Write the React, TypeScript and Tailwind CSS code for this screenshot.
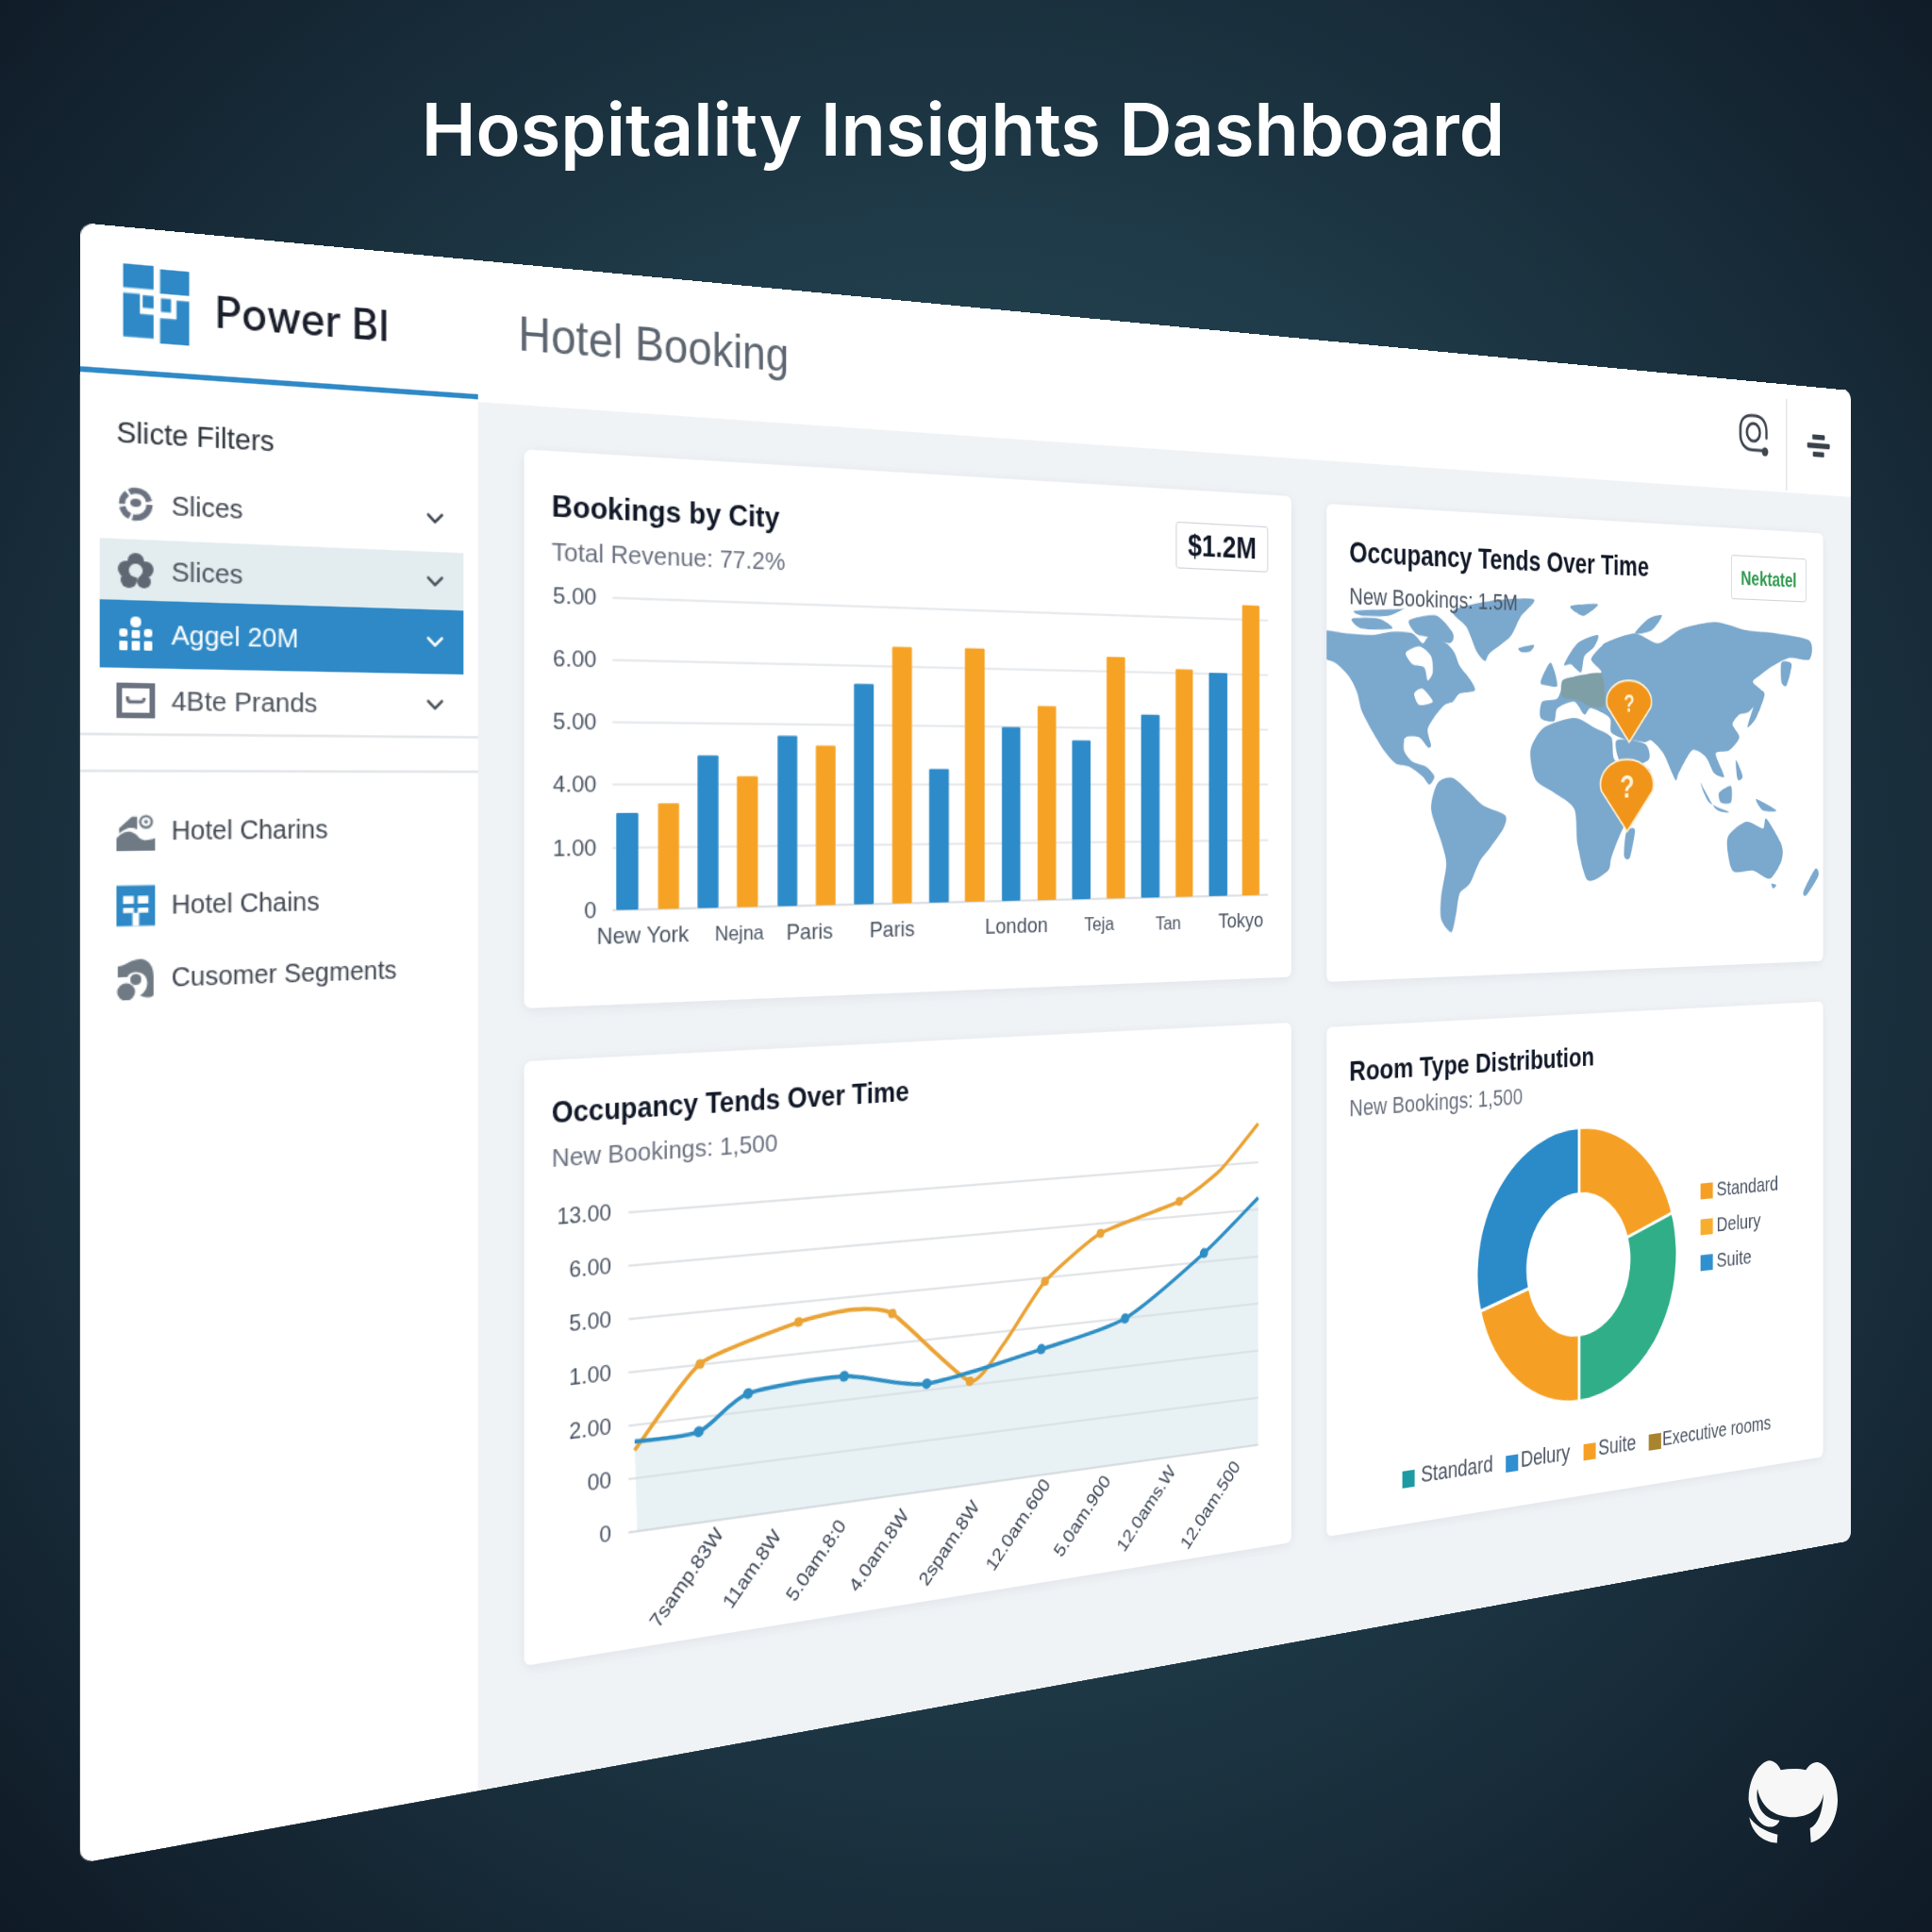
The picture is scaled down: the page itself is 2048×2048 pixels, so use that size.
import React from "react";
import { ChevronDown } from "lucide-react";

/* The dashboard window is laid out flat at 1800x1200 and then tilted with one matrix3d.
   P() converts a point measured on the tilted picture (1568 scale) into the flat chart space. */
const W = 1800, H = 1200, K = 0.42658, S = 2048 / 1568;
type Pt = [number, number];
function P(x: number, y: number): Pt {
  const X = (x - 65) / 1437;
  const u = X / (1 + K - K * X);
  const top = 180.7 + 136.3 * X;
  const bot = 1512.1 - 261.8 * X;
  return [u * W, ((y - top) / (bot - top)) * H];
}
const Z4 = (zx: number, zy: number): Pt => P((1390 + zx / 2.8) / S, (520 + zy / 2.904) / S);
function blob(raw: number[], t = 0.13) {
  const pts: Pt[] = [];
  for (let i = 0; i < raw.length; i += 2) pts.push(Z4(raw[i], raw[i + 1]));
  const n = pts.length;
  let d = `M${pts[0][0].toFixed(1)} ${pts[0][1].toFixed(1)}`;
  for (let i = 0; i < n; i++) {
    const p0 = pts[(i - 1 + n) % n], p1 = pts[i], p2 = pts[(i + 1) % n], p3 = pts[(i + 2) % n];
    d += ` C${(p1[0] + (p2[0] - p0[0]) * t).toFixed(1)} ${(p1[1] + (p2[1] - p0[1]) * t).toFixed(1)} ${(p2[0] - (p3[0] - p1[0]) * t).toFixed(1)} ${(p2[1] - (p3[1] - p1[1]) * t).toFixed(1)} ${p2[0].toFixed(1)} ${p2[1].toFixed(1)}`;
  }
  return d + " Z";
}
function smooth(pts: Pt[], t = 0.16) {
  let d = `M${pts[0][0]} ${pts[0][1]}`;
  for (let i = 0; i < pts.length - 1; i++) {
    const p0 = pts[i - 1] || pts[i], p1 = pts[i], p2 = pts[i + 1], p3 = pts[i + 2] || p2;
    d += ` C${p1[0] + (p2[0] - p0[0]) * t} ${p1[1] + (p2[1] - p0[1]) * t} ${p2[0] - (p3[0] - p1[0]) * t} ${p2[1] - (p3[1] - p1[1]) * t} ${p2[0]} ${p2[1]}`;
  }
  return d;
}

const BLUE = "#2e8bc9", ORANGE = "#f6a325", GRID = "#e1e4e8";

function Label({ at, size = 18, anchor = "middle", fill = "#4b5563", children, rotate }: { at: Pt; size?: number; anchor?: "middle" | "end" | "start"; fill?: string; children: React.ReactNode; rotate?: number }) {
  return (
    <text x={at[0]} y={at[1]} fontSize={size} textAnchor={anchor} dominantBaseline="central" fill={fill} transform={rotate ? `rotate(${rotate} ${at[0]} ${at[1]})` : undefined}>
      {children}
    </text>
  );
}

function BarChart() {
  const bars: [number, number, number, string][] = [
    [500, 518, 660, BLUE], [534, 551, 652, ORANGE], [566, 583, 613, BLUE], [598, 615, 630, ORANGE],
    [631, 647, 597, BLUE], [662, 678, 605, ORANGE], [693, 709, 555, BLUE], [724, 740, 525, ORANGE],
    [754, 770, 624, BLUE], [783, 799, 526, ORANGE], [813, 828, 590, BLUE], [842, 857, 573, ORANGE],
    [870, 885, 601, BLUE], [898, 913, 533, ORANGE], [926, 941, 580, BLUE], [954, 968, 543, ORANGE],
    [981, 996, 546, BLUE], [1008, 1022, 491, ORANGE],
  ];
  const ys = [261, 311, 361, 411, 462, 512];
  const yl = ["5.00", "6.00", "5.00", "4.00", "1.00", "0"];
  const xl: [string, number, number][] = [["New York", 522, 759], ["Nejna", 600, 757], ["Paris", 657, 756], ["Paris", 724, 754], ["London", 825, 751], ["Teja", 892, 750], ["Tan", 948, 749], ["Tokyo", 1007, 747]];
  const x0 = P(497, 0)[0], x1 = P(1029, 0)[0], xa = P(484, 0)[0];
  return (
    <svg width={743} height={342} viewBox="342 246 743 342" className="block">
      {ys.map((y, i) => (
        <g key={i}>
          <line x1={x0} x2={x1} y1={y} y2={y} stroke={i === 5 ? "#d3d7dc" : GRID} strokeWidth={1.5} />
          <Label at={[xa, y]} size={19} anchor="end">{yl[i]}</Label>
        </g>
      ))}
      {bars.map(([a, b, t, c], i) => {
        const xA = P(a, 0)[0], xB = P(b, 0)[0], yT = P(a, t)[1];
        return <rect key={i} x={xA} y={yT} width={xB - xA} height={512 - yT} fill={c} rx={1} />;
      })}
      {xl.map(([s, x, y], i) => (
        <Label key={i} at={P(x, y)} size={i === 1 || i === 5 || i === 6 ? 17 : 19}>{s}</Label>
      ))}
    </svg>
  );
}

function Pin({ c, r, tip, size }: { c: Pt; r: number; tip: Pt; size: number }) {
  const C = Z4(c[0], c[1]), T = Z4(tip[0], tip[1]);
  const rx = Z4(c[0] + r, c[1])[0] - C[0];
  const ry = Z4(c[0], c[1] + r)[1] - C[1];
  const lx = C[0] - rx * 0.97, rxx = C[0] + rx * 0.97, ly = C[1] + ry * 0.25;
  const d = `M${T[0]} ${T[1]} L${lx} ${ly} A${rx} ${ry} 0 1 1 ${rxx} ${ly} Z`;
  return (
    <g>
      <path d={d} fill="#f1951a" stroke="#fbeccf" strokeWidth={2} strokeLinejoin="round" />
      <Label at={[C[0], C[1] + 2]} size={size} fill="#fdf1d8">
        <tspan fontWeight="700">?</tspan>
      </Label>
    </g>
  );
}

function WorldMap() {
  const land = [
    [20, 432, 110, 440, 180, 445, 240, 435, 300, 440, 330, 470, 350, 450, 400, 470, 425, 500, 440, 540, 470, 580, 485, 615, 440, 625, 420, 650, 395, 660, 370, 690, 345, 735, 355, 785, 345, 790, 320, 760, 280, 760, 275, 800, 300, 835, 340, 850, 365, 880, 350, 905, 330, 880, 290, 850, 250, 840, 215, 800, 180, 740, 150, 680, 135, 620, 110, 570, 70, 530, 20, 505],
    [120, 395, 200, 395, 240, 425, 150, 425],
    [130, 370, 260, 365, 280, 360, 230, 385, 150, 385],
    [290, 400, 370, 385, 420, 440, 410, 470, 340, 450, 310, 440],
    [420, 370, 530, 340, 660, 335, 620, 390, 590, 450, 530, 500, 515, 525, 490, 495, 460, 420],
    [615, 485, 660, 475, 650, 495, 625, 498],
    [770, 355, 850, 350, 810, 385, 785, 375],
    [960, 440, 1000, 395, 1040, 385, 1010, 430],
    [375, 900, 420, 885, 470, 930, 510, 970, 575, 1000, 570, 1040, 530, 1100, 500, 1140, 470, 1210, 440, 1240, 430, 1300, 415, 1360, 385, 1320, 385, 1250, 400, 1150, 385, 1080, 355, 980],
    [880, 465, 960, 440, 1030, 470, 1100, 425, 1200, 405, 1290, 430, 1380, 440, 1478, 462, 1478, 520, 1420, 515, 1370, 540, 1330, 570, 1310, 590, 1340, 625, 1300, 680, 1270, 690, 1250, 720, 1270, 760, 1240, 800, 1200, 810, 1225, 880, 1195, 870, 1170, 820, 1130, 800, 1090, 870, 1080, 890, 1045, 810, 1010, 770, 990, 775, 960, 770, 940, 770, 890, 745, 885, 700, 830, 670, 810, 690, 780, 650, 730, 670, 720, 710, 680, 700, 685, 650, 730, 640, 750, 590, 790, 570, 860, 560, 830, 520, 860, 480],
    [750, 535, 790, 470, 850, 445, 840, 480, 810, 510, 800, 560, 770, 535],
    [680, 590, 710, 530, 730, 600, 700, 600],
    [650, 800, 690, 730, 780, 700, 840, 730, 890, 760, 900, 830, 960, 850, 1005, 870, 920, 1050, 890, 1130, 880, 1170, 820, 1200, 790, 1090, 780, 980, 720, 930, 665, 890],
    [905, 770, 990, 780, 1000, 830, 925, 850],
    [935, 1050, 960, 1045, 945, 1130, 928, 1125],
    [1330, 620, 1345, 630, 1320, 700, 1295, 730, 1300, 705],
    [1395, 530, 1425, 535, 1410, 600, 1395, 590],
    [1155, 900, 1200, 980, 1240, 990, 1180, 960],
    [1210, 930, 1245, 910, 1245, 960, 1215, 960],
    [1320, 950, 1380, 985, 1340, 985],
    [1260, 830, 1280, 880, 1265, 890],
    [1235, 1070, 1290, 1020, 1340, 1040, 1350, 1010, 1395, 1090, 1395, 1140, 1360, 1195, 1310, 1170, 1250, 1170],
    [1495, 1165, 1505, 1185, 1470, 1245, 1460, 1235],
    [1365, 1210, 1380, 1215, 1370, 1225],
  ];
  const holes = [
    [280, 500, 320, 480, 355, 510, 360, 560, 345, 585, 335, 545, 300, 535],
    [305, 625, 330, 610, 360, 650, 320, 660],
    [275, 765, 320, 772, 345, 800, 300, 825],
  ];
  return (
    <svg width={635} height={443} viewBox="1125 151 635 443" className="absolute inset-0 block">
      {land.map((l, i) => <path key={i} d={blob(l)} fill="#7ba8cd" />)}
      {holes.map((l, i) => <path key={i} d={blob(l)} fill="#ffffff" />)}
      <path d={blob([745, 585, 790, 572, 860, 565, 870, 660, 830, 665, 790, 645, 745, 635])} fill="#7f9fa6" />
      <Pin c={[943, 650]} r={66} tip={[943, 775]} size={23} />
      <Pin c={[937, 905]} r={78} tip={[937, 1050]} size={31} />
    </svg>
  );
}

function LineChart() {
  const ys = [756, 799, 842, 885, 928, 971, 1014];
  const yl = ["13.00", "6.00", "5.00", "1.00", "2.00", "00", "0"];
  const x0 = P(510, 0)[0], x1 = P(1021, 0)[0], xa = P(496, 0)[0], xf = P(517, 0)[0];
  const blue = ([[515, 1170], [567, 1162], [607, 1131], [685, 1117], [752, 1123], [845, 1095], [913, 1070], [977, 1017], [1021, 972]] as Pt[]).map((p) => P(p[0], p[1]));
  const orange = ([[515, 1177], [568, 1107], [648, 1073], [690, 1063], [724, 1066], [787, 1121], [815, 1090], [848, 1040], [893, 1001], [957, 975], [990, 950], [1021, 912]] as Pt[]).map((p) => P(p[0], p[1]));
  const xl: [string, number, number][] = [
    ["7samp.83W", 557, 1280], ["11am.8W", 610, 1273], ["5.0am.8:0", 662, 1266], ["4.0am.8W", 713, 1258], ["2spam.8W", 770, 1252],
    ["12.0am.600", 826, 1237], ["5.0am.900", 878, 1230], ["12.0ams.W", 930, 1224], ["12.0am.500", 982, 1221],
  ];
  const bd = smooth(blue, 0.12);
  return (
    <svg width={743} height={393} viewBox="342 715 743 393" className="block">
      <path d={`${bd} L${blue[blue.length - 1][0]} 1014 L${xf} 1014 Z`} fill="#e8f2f5" />
      {ys.map((y, i) => (
        <g key={i}>
          <line x1={x0} x2={x1} y1={y} y2={y} stroke={i === 6 ? "#cfd4d9" : "#d9dde1"} strokeWidth={1.3} />
          <Label at={[xa, y - 1]} size={18.5} anchor="end">{yl[i]}</Label>
        </g>
      ))}
      <path d={smooth(orange, 0.09)} fill="none" stroke="#eaa335" strokeWidth={3.4} strokeLinejoin="round" />
      <path d={bd} fill="none" stroke="#2f8fc4" strokeWidth={3.4} />
      {[1, 2, 3, 4, 5, 6, 7].map((i) => <circle key={i} cx={blue[i][0]} cy={blue[i][1]} r={4.5} fill="#2f8fc4" />)}
      {[1, 2, 4, 5, 7, 8, 9].map((i) => <circle key={i} cx={orange[i][0]} cy={orange[i][1]} r={4} fill="#eaa335" />)}
      {xl.map(([s, x, y], i) => (
        <Label key={i} at={P(x, y)} size={17} rotate={-50} fill="#374151">{s}</Label>
      ))}
    </svg>
  );
}

function Donut() {
  const cx = 1430, cy = 881, RX = 128, RY = 134, rx = 65, ry = 69;
  const pt = (a: number, X: number, Y: number): Pt => [cx + X * Math.sin((a * Math.PI) / 180), cy - Y * Math.cos((a * Math.PI) / 180)];
  const seg = (a: number, b: number) => {
    const A = pt(a, RX, RY), B = pt(b, RX, RY), C = pt(b, rx, ry), D = pt(a, rx, ry);
    const l = b - a > 180 ? 1 : 0;
    return `M${A[0]} ${A[1]} A${RX} ${RY} 0 ${l} 1 ${B[0]} ${B[1]} L${C[0]} ${C[1]} A${rx} ${ry} 0 ${l} 0 ${D[0]} ${D[1]} Z`;
  };
  const side: [string, string, number][] = [["Standard", "#f5a024", 965], ["Delury", "#f8ae2d", 994], ["Suite", "#2f8fd0", 1023]];
  const sx = P(1393, 0)[0], bx = P(1380, 0)[0];
  const bottom: [string, string, number, number][] = [
    ["Standard", "#1e9aa3", 1138, 1153], ["Delury", "#2f8fd0", 1222, 1234], ["Suite", "#f5a024", 1285, 1297], ["Executive rooms", "#a8842f", 1338, 1349],
  ];
  return (
    <svg width={635} height={372} viewBox="1125 736 635 372" className="block">
      <path d={seg(0, 72)} fill="#f5a024" stroke="#fff" strokeWidth={3} />
      <path d={seg(72, 180)} fill="#30ae88" stroke="#fff" strokeWidth={3} />
      <path d={seg(180, 255)} fill="#f5a024" stroke="#fff" strokeWidth={3} />
      <path d={seg(255, 360)} fill="#2b8ac8" stroke="#fff" strokeWidth={3} />
      {side.map(([s, c, y], i) => {
        const fy = P(1393, y)[1];
        return (
          <g key={i}>
            <rect x={bx} y={fy - 7} width={sx - bx - 5} height={16} fill={c} />
            <Label at={[sx, fy]} size={21} anchor="start">{s}</Label>
          </g>
        );
      })}
      {bottom.map(([s, c, a, t], i) => (
        <g key={i}>
          <rect x={P(a, 0)[0]} y={1058} width={P(a + 10, 0)[0] - P(a, 0)[0]} height={16} fill={c} />
          <Label at={[P(t, 0)[0], 1064]} size={i === 3 ? 20 : 21.5} anchor="start">{s}</Label>
        </g>
      ))}
    </svg>
  );
}

/* ---------- icons ---------- */
const LogoIcon = () => (
  <svg width={50} height={57} viewBox="0 0 72 85" fill="#2e89c6">
    <path d="M0 0H33V26H0Z" />
    <path d="M40 3H72V30H40Z" />
    <path d="M0 32H18V54H33V80H0Z" />
    <path d="M58 36H72V85H40V57H58Z" />
    <path d="M21 33H33V47H21ZM41 35H52V50H41Z" />
  </svg>
);
const GearIcon = () => (
  <svg width={28} height={28} viewBox="0 0 28 28" fill="none">
    <circle cx={14} cy={14} r={10} stroke="#6b7280" strokeWidth={4.5} strokeDasharray="18 2 9 2 9 2 18 3" />
    <ellipse cx={14} cy={13} rx={4} ry={3} fill="#6b7280" />
  </svg>
);
const FlowerIcon = () => (
  <svg width={28} height={28} viewBox="0 0 28 28" fill="#5f6872">
    <circle cx={14} cy={7} r={6} /><circle cx={7} cy={13} r={6} /><circle cx={21} cy={13} r={6} /><circle cx={9} cy={21} r={6} /><circle cx={20} cy={22} r={5} />
    <circle cx={14} cy={14} r={5} fill="#e3edf0" />
  </svg>
);
const DotsIcon = () => (
  <svg width={28} height={28} viewBox="0 0 28 28" fill="#fff">
    <circle cx={14} cy={5} r={4} />
    <rect x={2} y={10} width={6} height={6} rx={2} /><rect x={11} y={11} width={6} height={6} rx={1} /><rect x={20} y={10} width={6} height={6} rx={2} />
    <rect x={2} y={19} width={6} height={7} rx={1} /><rect x={11} y={19} width={6} height={7} rx={1} /><rect x={20} y={19} width={6} height={7} rx={1} />
  </svg>
);
const BoxIcon = () => (
  <svg width={28} height={26} viewBox="0 0 28 26" fill="none">
    <rect x={2} y={2} width={24} height={22} stroke="#6b7280" strokeWidth={4} />
    <path d="M8 10c0 4 1 4 3 4h6c2 0 3 0 3-3" stroke="#6b7280" strokeWidth={2.5} />
  </svg>
);
const HillIcon = () => (
  <svg width={30} height={30} viewBox="0 0 30 30" fill="#6f7a84">
    <path d="M2 12L12 3H16V13C10 10 6 13 2 16Z" />
    <path d="M0 30V20C8 11 14 15 18 20C22 23 27 21 30 20V30Z" />
    <circle cx={23} cy={7} r={4.5} fill="none" stroke="#6f7a84" strokeWidth={2} />
    <circle cx={23} cy={7} r={1.5} />
  </svg>
);
const GridIcon = () => (
  <svg width={29} height={31} viewBox="0 0 29 31">
    <rect width={29} height={31} fill="#2e89c6" />
    <path d="M5 8h8v6H5zM16 8h8v6h-8zM5 17h8v4H5zM16 17h8v4h-8zM12 21h5v10h-5z" fill="#fff" />
  </svg>
);
const BlobIcon = () => (
  <svg width={28} height={30} viewBox="0 0 28 30" fill="#6f7a84">
    <path d="M1 5C6 5 10 0 18 0 24 1 27 6 27 14V27C24 30 20 28 17 27 22 24 24 18 21 13 17 8 9 9 8 13H1Z" />
    <circle cx={7} cy={24} r={6.5} />
    <circle cx={14} cy={15} r={4} />
  </svg>
);
const AtIcon = () => (
  <svg width={48} height={48} viewBox="0 0 48 48" fill="none" stroke="#3f4650">
    <path d="M40 39H22C12 39 6 33 6 24V18C6 9 12 4 22 4H26C36 4 42 10 42 19V26" strokeWidth={3.2} strokeLinecap="round" />
    <circle cx={24} cy={21} r={9} strokeWidth={3.2} />
    <circle cx={40} cy={40} r={4.5} fill="#3f4650" stroke="none" />
  </svg>
);
const MenuIcon = () => (
  <svg width={33} height={25} viewBox="0 0 36 28" fill="#39414b">
    <rect x={8} y={1} width={20} height={6} rx={1.5} />
    <rect x={0} y={11} width={36} height={6} rx={1.5} />
    <rect x={9} y={21} width={18} height={6} rx={1.5} />
  </svg>
);
const OctoLogo = () => (
  <svg width={96} height={90} viewBox="218 132 288 268" fill="#f7f7f7">
    <path d="M285 135C300 135 315 148 322 165C350 160 380 160 402 165C410 150 425 138 440 140C475 150 503 200 503 260C503 320 470 380 418 396L415 350C440 340 455 300 458 240C450 290 410 315 360 315C310 315 260 290 248 225C240 270 260 322 318 325C310 350 270 360 240 310C225 285 218 265 220 250C222 195 250 142 285 135Z" />
    <path d="M222 315C235 335 270 362 312 370L310 397C265 395 230 365 222 315Z" />
  </svg>
);

/* ---------- sidebar ---------- */
function FilterRow({ icon, label, className, textClass }: { icon: React.ReactNode; label: string; className: string; textClass: string }) {
  return (
    <div className={`flex items-center ml-[14px] mr-[12px] pl-[12px] pr-[12px] ${className}`}>
      <span className="w-[28px] flex justify-center shrink-0">{icon}</span>
      <span className={`ml-[12px] flex-1 text-[20px] leading-none ${textClass}`}>{label}</span>
      <ChevronDown size={22} strokeWidth={2.4} className={textClass} />
    </div>
  );
}
function NavRow({ icon, label, className }: { icon: React.ReactNode; label: string; className: string }) {
  return (
    <div className={`flex items-center pl-[26px] gap-[12px] ${className}`}>
      <span className="w-[28px] flex justify-center shrink-0">{icon}</span>
      <span className="text-[19.5px] leading-none text-[#3f4650]">{label}</span>
    </div>
  );
}

export default function App() {
  return (
    <div className="w-[2048px] h-[2048px] relative overflow-hidden [font-family:'Liberation_Sans',Arial,sans-serif] bg-[radial-gradient(ellipse_at_50%_48%,#2f5662_0%,#1f3a48_50%,#0f1a26_100%)]">
      <div className="h-[236px] flex justify-center pt-[90px] pr-[6px]">
        <h1 className="[font-family:Inter,sans-serif] font-semibold text-[77.5px] leading-[94px] text-white">Hospitality Insights Dashboard</h1>
      </div>

      <div className="ml-[85px] w-[1800px] h-[1200px] origin-top-left [transform:matrix3d(1.487609,0.141073,0,0.000236989,0,1.449167,0,0,0,0,1,0,0,0,0,1)] bg-white rounded-[10px] overflow-hidden flex flex-col">
        {/* header */}
        <header className="h-[111px] shrink-0 flex bg-white">
          <div className="w-[304px] h-[109px] shrink-0 border-b-[4px] border-[#2e89c6] flex items-center pl-[30px] gap-[18px]">
            <span className="mt-[6px] block"><LogoIcon /></span>
            <span className="[font-family:Inter,sans-serif] font-medium text-[32px] leading-none text-[#1a1f2b] mt-[10px]">Power BI</span>
          </div>
          <div className="flex-1 flex items-center pl-[33px] pb-[1px] text-[38px] leading-none text-[#5d6670]">Hotel Booking</div>
          <div className="flex items-center pr-[21px] pb-[2px]"><AtIcon /></div>
          <div className="w-[93px] mt-[15px] mb-[2px] border-l-2 border-[#e2e5e8] flex items-center justify-center pr-[3px] pb-[3px]"><MenuIcon /></div>
        </header>

        <div className="flex-1 flex min-h-0">
          {/* sidebar */}
          <aside className="w-[304px] shrink-0 bg-white flex flex-col">
            <div className="h-[67px] flex items-end pl-[26px] pb-[15px] text-[21.5px] leading-none text-[#2b313a]">Slicte Filters</div>
            <FilterRow icon={<GearIcon />} label="Slices" className="h-[52px]" textClass="text-[#3f4650]" />
            <FilterRow icon={<FlowerIcon />} label="Slices" className="h-[45px] bg-[#e3edf0]" textClass="text-[#4b535c]" />
            <FilterRow icon={<DotsIcon />} label="Aggel 20M" className="h-[50px] bg-[#2e89c6]" textClass="text-white" />
            <FilterRow icon={<BoxIcon />} label="4Bte Prands" className="h-[47px]" textClass="text-[#4b535c]" />
            <div className="h-[29px] border-y-2 border-[#e4e7ea] mt-[1px]" />
            <NavRow icon={<HillIcon />} label="Hotel Charins" className="h-[54px] mt-[17px]" />
            <NavRow icon={<GridIcon />} label="Hotel Chains" className="h-[55px]" />
            <NavRow icon={<BlobIcon />} label="Cusomer Segments" className="h-[54px]" />
          </aside>

          {/* main */}
          <main className="flex-1 bg-[#f0f3f6] pl-[38px] pt-[35px] grid grid-cols-[743px_635px] grid-rows-[448px_478px] gap-x-[40px] gap-y-[36px] content-start">
            <section className="self-start h-[442px] bg-white rounded-[6px] shadow-[0_2px_10px_rgba(120,135,150,0.14)] overflow-hidden">
              <div className="h-[100px] flex justify-between pl-[23px] pr-[26px] pt-[29px]">
                <div>
                  <div className="text-[24.5px] leading-[30px] font-bold text-[#111827]">Bookings by City</div>
                  <div className="mt-[7px] text-[21px] leading-[28px] text-[#6b7280]">Total Revenue: 77.2%</div>
                </div>
                <div className="w-[101px] h-[42px] flex items-center justify-center border border-[#cfd4d9] rounded-[3px] text-[27px] font-bold text-[#111827]">$1.2M</div>
              </div>
              <BarChart />
            </section>

            <section className="relative self-end h-[443px] bg-white rounded-[6px] shadow-[0_2px_10px_rgba(120,135,150,0.14)] overflow-hidden">
              <WorldMap />
              <div className="relative flex justify-between pl-[26px] pr-[24px] pt-[29px]">
                <div>
                  <div className="text-[27px] leading-[30px] font-bold text-[#111827]">Occupancy Tends Over Time</div>
                  <div className="mt-[12px] text-[22px] leading-[28px] text-[#4b5563]">New Bookings: 1.5M</div>
                </div>
                <div className="w-[105px] h-[45px] -mt-[2px] flex items-center justify-center border border-[#cfd4d9] rounded-[3px] bg-white text-[20px] font-bold text-[#2e9a4e]">Nektatel</div>
              </div>
            </section>

            <section className="bg-white rounded-[6px] shadow-[0_2px_10px_rgba(120,135,150,0.14)] overflow-hidden">
              <div className="h-[85px] pl-[23px] pt-[27px]">
                <div className="text-[23.5px] leading-[30px] font-bold text-[#111827]">Occupancy Tends Over Time</div>
                <div className="mt-[7px] text-[21px] leading-[28px] text-[#6b7280]">New Bookings: 1,500</div>
              </div>
              <LineChart />
            </section>

            <section className="self-end h-[472px] bg-white rounded-[6px] shadow-[0_2px_10px_rgba(120,135,150,0.14)] overflow-hidden">
              <div className="h-[100px] pl-[26px] pt-[27px]">
                <div className="text-[26.5px] leading-[30px] font-bold text-[#111827]">Room Type Distribution</div>
                <div className="mt-[6px] text-[22px] leading-[28px] text-[#6b7280]">New Bookings: 1,500</div>
              </div>
              <Donut />
            </section>
          </main>
        </div>
      </div>

      <div className="absolute left-[1853px] top-[1865px]"><OctoLogo /></div>
    </div>
  );
}
